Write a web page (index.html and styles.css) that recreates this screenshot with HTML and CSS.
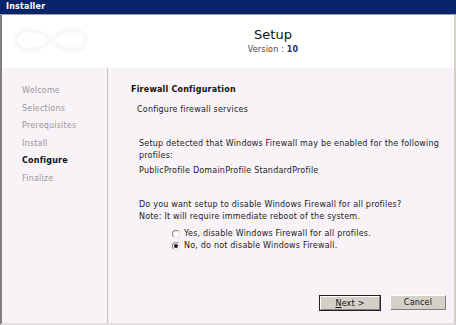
FILE: index.html
```html
<!DOCTYPE html>
<html lang="en">
<head>
<meta charset="UTF-8">
<title>Installer</title>
<link rel="stylesheet" href="styles.css">
</head>
<body>
<div class="window">
  <div class="titlebar">Installer</div>

  <header class="banner">
    <!-- faint watermark logo -->
    <svg class="mark" width="90" height="26" viewBox="0 0 90 26">
      <path d="M45 13 C35 0 10 0 10 13 C10 26 35 26 45 13 C55 0 80 0 80 13 C80 26 55 26 45 13 Z" fill="none" stroke="#f8f8f8" stroke-width="4"/>
    </svg>
    <div class="titles">
      <h1>Setup</h1>
      <p class="version">Version : <span>10</span></p>
    </div>
  </header>

  <div class="main">
    <ul class="steps">
      <li>Welcome</li>
      <li>Selections</li>
      <li>Prerequisites</li>
      <li>Install</li>
      <li class="current">Configure</li>
      <li>Finalize</li>
    </ul>

    <div class="page">
      <h2>Firewall Configuration</h2>
      <p class="subtitle">Configure firewall services</p>

      <div class="body">
        <p>Setup detected that Windows Firewall may be enabled for the following profiles:</p>
        <p class="profiles">PublicProfile DomainProfile StandardProfile</p>

        <p class="question">Do you want setup to disable Windows Firewall for all profiles?<br>Note: It will require immediate reboot of the system.</p>

        <div class="choices">
          <label><input type="radio" name="fw"> Yes, disable Windows Firewall for all profiles.</label>
          <label><input type="radio" name="fw" checked> No, do not disable Windows Firewall.</label>
        </div>
      </div>

      <div class="buttons">
        <button type="button" class="default"><u>N</u>ext &gt;</button>
        <button type="button">Cancel</button>
      </div>
    </div>
  </div>
</div>
</body>
</html>
```

FILE: styles.css
```css
body {
  margin: 0;
  font-family: 'DejaVu Sans', sans-serif;
  font-size: 8px;
  letter-spacing: 0.2px;
  background: #fff;
}
.window {
  width: 456px;
  height: 325px;
  box-sizing: border-box;
  border-left: 2px solid #808080;
  border-right: 2px solid #d4d0c8;
  border-bottom: 2px solid #e4e0e4;
  display: flex;
  flex-direction: column;
}
.titlebar {
  margin-left: -2px;
  margin-right: -2px;
  height: 14px;
  line-height: 14px;
  padding-left: 6px;
  background: #0a246a; /* classic navy caption */
  color: white;
  font-weight: bold;
  font-size: 8px;
  border-bottom: 1px solid #a0a0a0;
}
.banner {
  height: 53px;
  background: white;
  display: flex;
  align-items: flex-start;
}
.mark {
  margin: 12px 0 0 4px;
}
.titles {
  flex: 1;
  text-align: center;
  padding-right: 4px;
}
.banner h1 {
  margin: 12px 0 0;
  font-weight: normal;
  font-size: 13px;
  letter-spacing: 0;
  color: #111;
}
.version {
  margin: 3px 0 0;
  color: #444;
}
.version span {
  color: #223366;
  font-weight: bold;
}
.main {
  flex: 1;
  display: flex;
  background: #f7f3f7;
}
.steps {
  list-style: none;
  margin: 0;
  padding: 14px 0 0 20px;
  width: 85px;
  border-right: 1px solid #c4c0c4;
}
.steps li {
  color: #9a979a;
  height: 17.6px;
  line-height: 17.6px;
}
.steps li.current {
  color: #111;
  font-weight: bold;
}
.page {
  flex: 1;
  display: flex;
  flex-direction: column;
  padding: 16px 8px 0 23px;
  color: #222;
}
.page p {
  margin: 0;
}
h2 {
  margin: 0;
  font-size: 8px;
  font-weight: bold;
  color: #111;
  line-height: 12px;
}
.subtitle {
  margin: 8px 0 0 6px !important;
  line-height: 12px;
}
.body {
  padding: 22px 0 0 8px;
  line-height: 12px;
}
.profiles {
  margin-top: 3px !important;
}
.question {
  margin-top: 22px !important;
}
.choices {
  display: flex;
  flex-direction: column;
  padding: 5px 0 0 33px;
}
.choices label {
  display: flex;
  align-items: center;
  gap: 4px;
  height: 12px;
}
.choices input {
  appearance: none;
  margin: 0;
  width: 8px;
  height: 8px;
  border-radius: 50%;
  border: 1px solid;
  border-color: #808080 #e0e0e0 #e0e0e0 #808080;
  background: white;
  display: grid;
  place-content: center;
}
.choices input:checked::before {
  content: '';
  width: 4px;
  height: 4px;
  border-radius: 50%;
  background: #111;
}
.buttons {
  margin-top: auto;
  margin-bottom: 12px;
  display: flex;
  justify-content: flex-end;
  gap: 9px;
}
button {
  font-family: inherit;
  font-size: 8px;
  letter-spacing: 0.2px;
  width: 56px;
  height: 15px;
  padding: 0;
  background: #d4d0c8;
  color: #111;
  border: 1px solid;
  border-color: #fff #808080 #808080 #fff;
}
button.default {
  width: 62px;
  height: 16px;
  outline: 1px solid #222;
  outline-offset: -1px;
  border-width: 2px;
}
```
